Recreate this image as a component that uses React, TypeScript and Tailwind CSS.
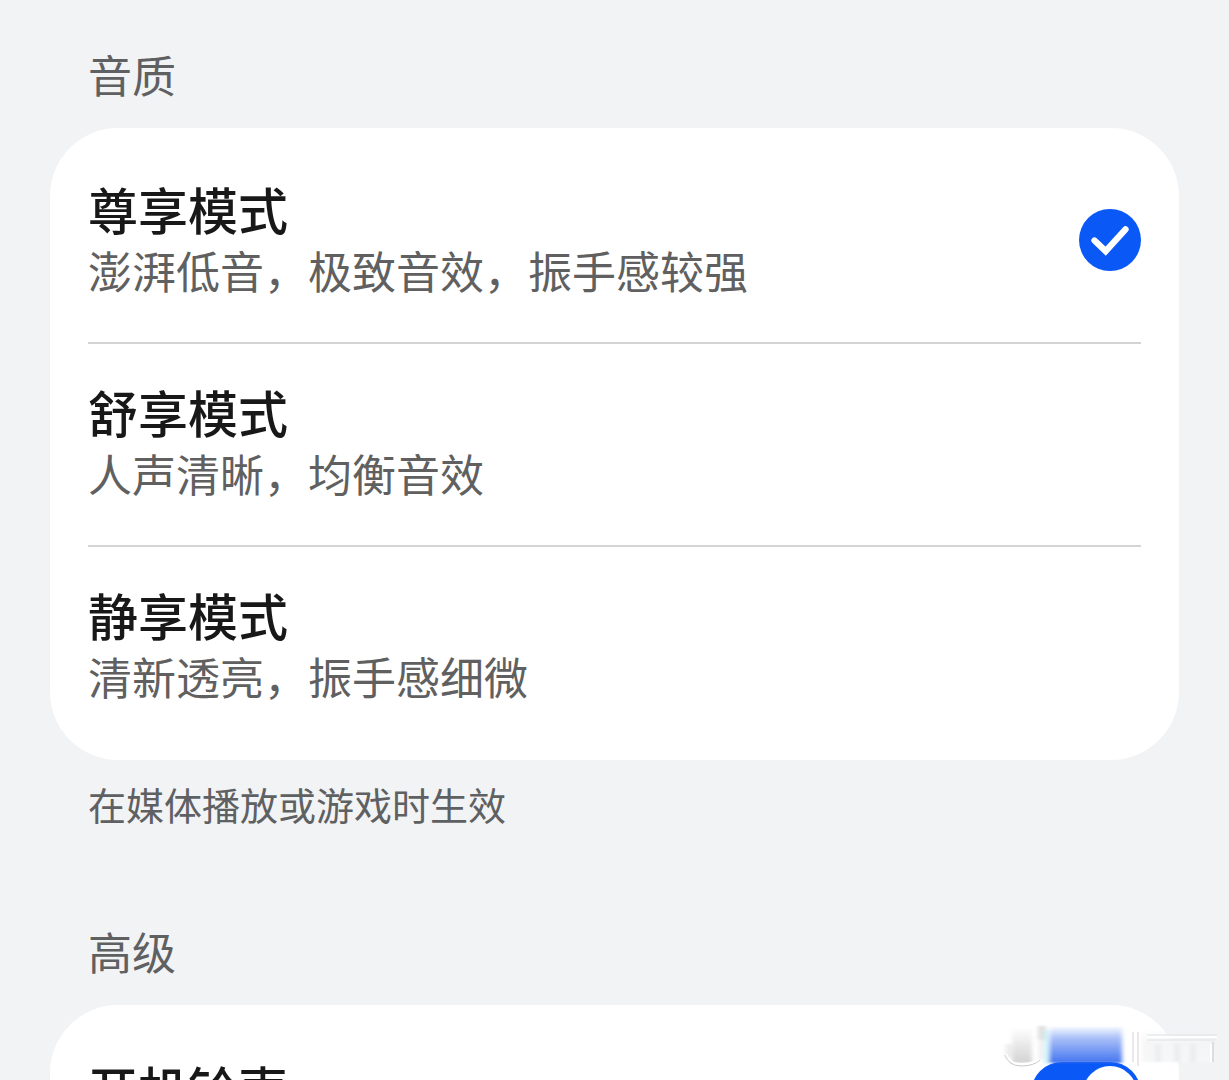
import React, { useState } from 'react';

interface SoundMode {
    id: string;
    title: string;
    desc: string;
}

const MODES: SoundMode[] = [
    { id: 'premium', title: '尊享模式', desc: '澎湃低音，极致音效，振手感较强' },
    { id: 'comfort', title: '舒享模式', desc: '人声清晰，均衡音效' },
    { id: 'quiet', title: '静享模式', desc: '清新透亮，振手感细微' },
];

const SectionTitle: React.FC<{ children: React.ReactNode }> = ({ children }) => (
    <h2 className="px-[38px] text-[44px] leading-[60px] text-[#5f6062]">{children}</h2>
);

interface ModeRowProps {
    mode: SoundMode;
    checked: boolean;
    onSelect: () => void;
}

const ModeRow: React.FC<ModeRowProps> = ({ mode, checked, onSelect }) => (
    <label className="flex items-center justify-between pt-[37px] pb-10 cursor-pointer">
        <span className="flex flex-col">
            <span className="text-[50px] leading-[60px] font-medium text-[#181818]">{mode.title}</span>
            <span className="text-[44px] leading-[64px] text-[#606060]">{mode.desc}</span>
        </span>
        <span className="grid shrink-0 place-items-center">
            <input
                type="radio"
                name="sound-mode"
                checked={checked}
                onChange={onSelect}
                className="col-start-1 row-start-1 w-[62px] h-[62px] appearance-none rounded-full checked:bg-[#0a59f7]"
            />
            {checked && (
                <svg viewBox="0 0 64 64" className="col-start-1 row-start-1 w-[62px] h-[62px] pointer-events-none" fill="none">
                    <path d="M16 32.5 L27.5 43.5 L48 21" stroke="white" strokeWidth="6.5" strokeLinecap="round" strokeLinejoin="miter" />
                </svg>
            )}
        </span>
    </label>
);

// Smudged stamp in the bottom corner
const Smudge: React.FC = () => (
    <svg viewBox="0 0 224 48" className="absolute right-2 bottom-2 w-56 h-12 pointer-events-none" fill="none" aria-hidden="true">
        <defs>
            <linearGradient id="smudge-blue" x1="0" y1="0" x2="0" y2="1">
                <stop offset="0" stopColor="#2f66ee" stopOpacity="0.05" />
                <stop offset="0.3" stopColor="#2f66ee" stopOpacity="0.4" />
                <stop offset="1" stopColor="#2f66ee" stopOpacity="0.9" />
            </linearGradient>
            <linearGradient id="smudge-gray" x1="0" y1="0" x2="0" y2="1">
                <stop offset="0" stopColor="#c8c8c8" stopOpacity="0" />
                <stop offset="1" stopColor="#c8c8c8" stopOpacity="0.8" />
            </linearGradient>
            <linearGradient id="smudge-pale" x1="0" y1="0" x2="0" y2="1">
                <stop offset="0" stopColor="#f1f3f5" stopOpacity="0" />
                <stop offset="0.4" stopColor="#f4f5f6" stopOpacity="0.9" />
                <stop offset="1" stopColor="#f7f7f8" />
            </linearGradient>
            <filter id="smudge-soft" x="-10%" y="-10%" width="120%" height="120%">
                <feGaussianBlur stdDeviation="2 1" />
            </filter>
        </defs>
        <g filter="url(#smudge-soft)">
            <rect x="145" y="6" width="70" height="32" fill="url(#smudge-pale)" />
            <rect x="15" y="3" width="20" height="36" fill="url(#smudge-gray)" />
            <rect x="9" y="20" width="5" height="14" fill="#eaeaea" />
            <rect x="41" y="2" width="8" height="14" fill="#d8d8d6" opacity="0.8" />
            <rect x="42" y="16" width="4" height="20" fill="#e8e8e8" opacity="0.8" />
            <rect x="47" y="6" width="5" height="34" fill="#c8f2fa" opacity="0.8" />
            <rect x="52" y="3" width="73" height="36" fill="url(#smudge-blue)" />
            <path d="M161 20 V38 M180 20 V38 M196 20 V38" stroke="#eaebed" strokeWidth="5" />
        </g>
        <path d="M136 8 V38 M141 8 V42" stroke="#ece8ea" strokeWidth="2" />
        <path d="M8 31 Q12 42 24 42 Q37 42 43 36" stroke="#c8c8c8" strokeWidth="1" />
        <path d="M9 30 Q13 40 24 40 Q36 40 42 35" stroke="#ffffff" strokeWidth="2" />
        <path d="M150 11 H220 M150 16 H218" stroke="#e2e2e4" strokeWidth="1" />
        <path d="M150 13 H220" stroke="#ffffff" strokeWidth="2" />
        <path d="M214 20 V38" stroke="#ffffff" strokeWidth="2" />
        <path d="M216 18 V38" stroke="#c6c6c8" strokeWidth="1" />
    </svg>
);

export default function App() {
    const [selected, setSelected] = useState('premium');
    const [bootSound, setBootSound] = useState(true);

    return (
        <main className="relative h-screen overflow-hidden bg-[#f1f3f5] px-[50px] pt-11 font-['Noto_Sans_CJK_SC',sans-serif]">
            <section>
                <SectionTitle>音质</SectionTitle>
                <div className="mt-6 rounded-[68px] bg-white px-[38px] pt-[13px] pb-3 divide-y-2 divide-[#d4d4d4]">
                    {MODES.map((mode) => (
                        <ModeRow
                            key={mode.id}
                            mode={mode}
                            checked={selected === mode.id}
                            onSelect={() => setSelected(mode.id)}
                        />
                    ))}
                </div>
                <p className="mt-4 px-[38px] text-[38px] leading-[56px] text-[#5f6062]">在媒体播放或游戏时生效</p>
            </section>

            <section className="mt-[89px]">
                <SectionTitle>高级</SectionTitle>
                <div className="mt-6 rounded-[68px] bg-white px-[38px] pt-[13px] pb-3">
                    <label className="flex items-center justify-between py-[39px] cursor-pointer">
                        <span className="pb-3 text-[50px] leading-[60px] font-medium text-[#181818]">开机铃声</span>
                        <input
                            type="checkbox"
                            role="switch"
                            checked={bootSound}
                            onChange={(e) => setBootSound(e.target.checked)}
                            className="flex w-[110px] h-[62px] p-1 appearance-none rounded-full bg-gray-300 before:w-[54px] before:h-[54px] before:rounded-full before:bg-white checked:bg-[#0a59f7] checked:justify-end"
                        />
                    </label>
                </div>
            </section>
            <Smudge />
        </main>
    );
}
